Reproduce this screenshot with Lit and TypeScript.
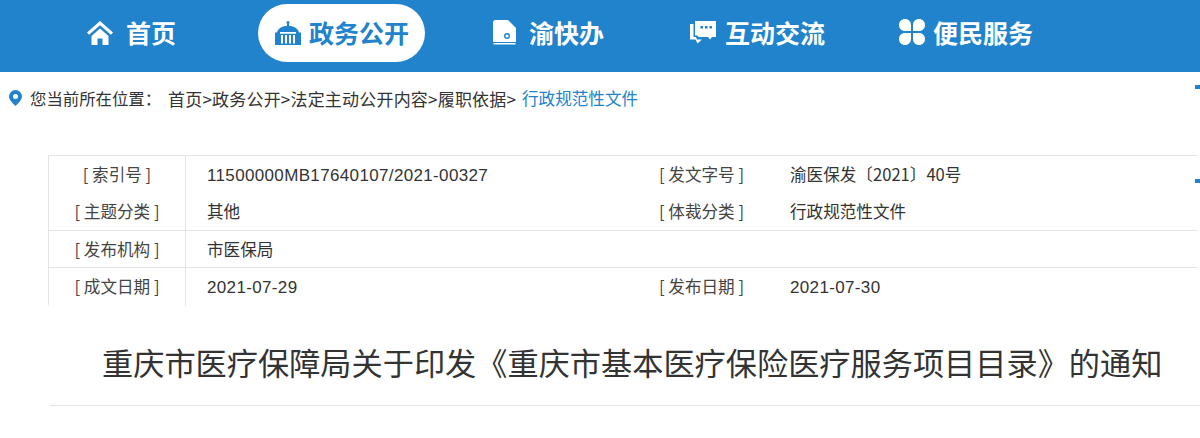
import { LitElement, html, css, svg } from "lit";
import { customElement } from "lit/decorators.js";

const icons = {
  home: svg`<svg class="i home" viewBox="0 0 26 24"><path d="M13 0 0 11.500l2 2.300L13 4.300l11 9.500 2-2.300z" fill="#fff"/><path d="M13 7.500 4.500 15v9h6v-6.500h5V24h6v-9z" fill="#fff"/></svg>`,
  gov: svg`<svg class="i gov" viewBox="0 0 26 24"><circle cx="13" cy="1.500" r="1.500" fill="#2083cc"/><path fill-rule="evenodd" d="M12 2.500h2v2.200c5 .3 9 2.800 10 6.800h2V24H0V11.500h2c1-4 5-6.500 10-6.800zM5 11h16v1.800H5zM6 14v8.500h2V14zm4 0v8.500h2V14zm4 0v8.500h2V14zm4 0v8.500h2V14z" fill="#2083cc"/></svg>`,
  doc: svg`<svg class="i doc" viewBox="0 0 23 25"><path d="M2.500 0H15l8 8v14H0V2.500A2.500 2.500 0 0 1 2.500 0z" fill="#fff"/><path d="M.5 23h22v1.500H.5z" fill="#fff"/><circle cx="14" cy="16" r="2.300" fill="none" stroke="#2083cc" stroke-width="1.400"/></svg>`,
  chat: svg`<svg class="i chat" viewBox="0 0 26 23"><path d="M5 0h21v16h-4l-2 2.500-2-2.500H8.500l-1-1.500H5z" fill="#fff"/><path d="M0 3h3.500v13H6l1 2.500h5l-4.500 4-2-4H0z" fill="#fff"/><path d="M10.500 5h2.500v2.500h-2.500zM15 5h2.500v2.500H15zM19.500 5H22v2.500h-2.500z" fill="#2083cc"/></svg>`,
  flower: svg`<svg class="i flower" viewBox="0 0 26 26"><path d="M6 0c3.500 0 6 2.500 6 6v6H6C2.500 12 0 9.500 0 6s2.500-6 6-6zM20 0c3.500 0 6 2.500 6 6s-2.500 6-6 6h-6V6c0-3.500 2.500-6 6-6zM6 14h6v6c0 3.500-2.500 6-6 6s-6-2.500-6-6 2.500-6 6-6zM14 14h6c3.500 0 6 2.500 6 6s-2.500 6-6 6-6-2.500-6-6z" fill="#fff"/></svg>`,
};

@customElement("app-root")
export class AppRoot extends LitElement {
  static styles = css`
    :host {
      display: block;
      position: relative;
      width: 1200px;
      height: 438px;
      overflow: hidden;
      background: #fff;
      font-family: "Noto Sans CJK SC", "Liberation Sans", sans-serif;
      color: #333;
    }
    .nav {
      display: flex;
      align-items: flex-start;
      height: 72px;
      box-sizing: border-box;
      padding: 4px 0 0 87px;
      background: #2083cc;
    }
    .item {
      display: flex;
      align-items: center;
      height: 58px;
      color: #fff;
      font-size: 25px;
      font-weight: 700;
      line-height: 58px;
      white-space: nowrap;
    }
    .item span { margin-top: -2px; }
    .item.home-item { gap: 13px; }
    .item.active {
      margin-left: 82px;
      width: 167px;
      box-sizing: border-box;
      padding-left: 17px;
      gap: 8px;
      background: #fff;
      border-radius: 29px;
      color: #2083cc;
    }
    .item.doc-item { margin-left: 68px; gap: 13px; }
    .item.chat-item { margin-left: 86px; gap: 9px; }
    .item.flower-item { margin-left: 74px; gap: 8px; }
    .i { display: block; flex: none; }
    .home { width: 26px; height: 24px; margin-top: -1px; }
    .gov { width: 26px; height: 24px; margin-top: -1px; }
    .doc { width: 23px; height: 25px; margin-top: -1px; }
    .chat { width: 26px; height: 23px; margin-top: -1px; }
    .flower { width: 26px; height: 26px; margin-top: -2px; }

    .crumb {
      display: flex;
      align-items: center;
      height: 52px;
      padding-left: 9px;
      font-size: 16.4px;
      white-space: nowrap;
    }
    .pin { width: 13px; height: 16px; margin-right: 8px; flex: none; }
    .where { width: 138px; flex: none; }
    .path { width: 348px; flex: none; font-size: 17px; letter-spacing: 0.2px; }
    .link { margin-left: 6px; color: #2083cc; font-size: 16.6px; }

    .meta {
      margin: 31px 3px 0 48px;
      border-left: 1px solid #e4e4e4;
      font-size: 16.6px;
    }
    .row {
      display: grid;
      grid-template-columns: 137px 447px 137px 1fr;
      height: 37.5px;
      line-height: 37px;
      box-sizing: border-box;
    }
    .row.line { border-top: 1px solid #e4e4e4; }
    .row.short { height: 37px; }
    .row.tall { height: 38px; }
    .label { text-align: center; color: #444; border-right: 1px solid #e4e4e4; white-space: nowrap; }
    .label.right { border-right: none; }
    .value { padding-left: 21px; white-space: nowrap; color: #333; }
    .value.right { padding-left: 20px; }
    .num { font-family: "Liberation Sans", sans-serif; font-size: 17px; letter-spacing: 0.35px; }

    .title {
      margin: 0 0 0 50px;
      height: 101px;
      box-sizing: border-box;
      padding: 35px 0 0 52px;
      border-bottom: 1px solid #e4e4e4;
      font-size: 31.2px;
      font-weight: 400;
      line-height: 44px;
      white-space: nowrap;
      color: #333;
    }
    .mark { position: absolute; left: 1195px; width: 5px; height: 4px; background: #2083cc; }
    .mark.a { top: 85px; }
    .mark.b { top: 179px; }
  `;

  render() {
    return html`
      <div class="nav">
        <div class="item home-item">${icons.home}<span>首页</span></div>
        <div class="item active">${icons.gov}<span>政务公开</span></div>
        <div class="item doc-item">${icons.doc}<span>渝快办</span></div>
        <div class="item chat-item">${icons.chat}<span>互动交流</span></div>
        <div class="item flower-item">${icons.flower}<span>便民服务</span></div>
      </div>
      <div class="crumb">
        <svg class="pin" viewBox="0 0 13 16"><path fill-rule="evenodd" d="M6.500 0A6.500 6.500 0 0 0 0 6.500C0 10.500 6.500 16 6.500 16S13 10.500 13 6.500A6.500 6.500 0 0 0 6.500 0zm0 4a2.500 2.500 0 1 1 0 5 2.500 2.500 0 0 1 0-5z" fill="#2083cc"/></svg>
        <span class="where">您当前所在位置：</span>
        <span class="path">首页&gt;政务公开&gt;法定主动公开内容&gt;履职依据&gt;</span>
        <span class="link">行政规范性文件</span>
      </div>
      <div class="meta">
        <div class="row line">
          <div class="label">[ 索引号 ]</div>
          <div class="value"><span class="num">11500000MB17640107/2021-00327</span></div>
          <div class="label right">[ 发文字号 ]</div>
          <div class="value right">渝医保发〔2021〕40号</div>
        </div>
        <div class="row">
          <div class="label">[ 主题分类 ]</div>
          <div class="value">其他</div>
          <div class="label right">[ 体裁分类 ]</div>
          <div class="value right">行政规范性文件</div>
        </div>
        <div class="row line short">
          <div class="label">[ 发布机构 ]</div>
          <div class="value">市医保局</div>
          <div class="label right"></div>
          <div class="value right"></div>
        </div>
        <div class="row line tall">
          <div class="label">[ 成文日期 ]</div>
          <div class="value"><span class="num">2021-07-29</span></div>
          <div class="label right">[ 发布日期 ]</div>
          <div class="value right"><span class="num">2021-07-30</span></div>
        </div>
      </div>
      <h1 class="title">重庆市医疗保障局关于印发《重庆市基本医疗保险医疗服务项目目录》的通知</h1>
      <div class="mark a"></div>
      <div class="mark b"></div>
    `;
  }
}
